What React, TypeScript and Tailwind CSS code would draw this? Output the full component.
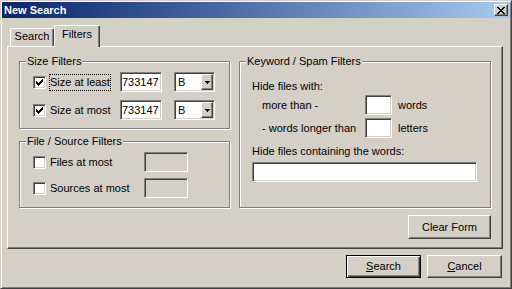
import React from "react";

const sunken =
  "border border-t-[#808080] border-l-[#808080] border-b-white border-r-white shadow-[inset_1px_1px_0_#404040,inset_-1px_-1px_0_#d4d0c8]";
const raised =
  "border border-t-white border-l-white border-b-[#404040] border-r-[#404040] shadow-[inset_-1px_-1px_0_#808080]";

function CheckMark() {
  return (
    <svg width="7" height="7" viewBox="0 0 7 7" shapeRendering="crispEdges">
      <path
        fill="#000"
        d="M6 0h1v1h-1z M5 1h2v1h-2z M0 2h1v1h-1z M4 2h3v1h-3z M0 3h2v1h-2z M3 3h3v1h-3z M0 4h5v1h-5z M1 5h3v1h-3z M2 6h1v1h-1z"
      />
    </svg>
  );
}

function Check({ checked }: { checked?: boolean }) {
  return (
    <div className={`w-[13px] h-[13px] shrink-0 bg-white flex items-center justify-center ${sunken}`}>
      {checked && <CheckMark />}
    </div>
  );
}

function Group({
  label,
  className,
  children,
}: {
  label: string;
  className?: string;
  children?: React.ReactNode;
}) {
  return (
    <div className={`relative border border-[#808080] shadow-[1px_1px_0_white,inset_1px_1px_0_white] ${className ?? ""}`}>
      <span className="absolute left-[6px] top-[-7px] bg-[#d4d0c8] px-[1px] leading-[13px] whitespace-nowrap">
        {label}
      </span>
      {children}
    </div>
  );
}

function Arrow() {
  return (
    <svg width="5" height="3" viewBox="0 0 5 3" shapeRendering="crispEdges">
      <path fill="#000" d="M0 0h5v1H0z M1 1h3v1H1z M2 2h1v1H2z" />
    </svg>
  );
}

function SizeRow({ label, focused }: { label: string; focused?: boolean }) {
  return (
    <div className="flex items-center h-[20px]">
      <div className="w-[87px] flex items-center">
        <Check checked />
        <span
          className={`ml-[3px] py-[1px] border leading-[13px] whitespace-nowrap ${
            focused ? "border-dotted border-black" : "border-transparent"
          }`}
        >
          {label}
        </span>
      </div>
      <div className={`w-[42px] h-[20px] bg-white pl-[1px] overflow-hidden flex items-center whitespace-nowrap ${sunken}`}>
        733147
      </div>
      <div className={`ml-[12px] w-[41px] h-[20px] bg-white p-[1px] flex items-stretch justify-between ${sunken}`}>
        <span className="pl-[2px] flex items-center">B</span>
        <div className={`w-[12px] bg-[#d4d0c8] flex items-center justify-center ${raised}`}>
          <Arrow />
        </div>
      </div>
    </div>
  );
}

function FileRow({ label }: { label: string }) {
  return (
    <div className="flex items-center h-[20px]">
      <div className="w-[111px] flex items-center">
        <Check />
        <span className="ml-[4px] leading-[13px] whitespace-nowrap">{label}</span>
      </div>
      <div className={`w-[44px] h-[20px] bg-[#d4d0c8] ${sunken}`} />
    </div>
  );
}

function KwRow({ label, unit, className }: { label: string; unit: string; className?: string }) {
  return (
    <div className={`flex items-center h-[20px] pl-[10px] ${className ?? ""}`}>
      <span className="w-[103px] leading-[13px] whitespace-nowrap">{label}</span>
      <div className={`w-[27px] h-[20px] bg-white ${sunken}`} />
      <span className="ml-[6px] leading-[13px]">{unit}</span>
    </div>
  );
}

export default function App() {
  return (
    <div
      className="w-[512px] h-[289px] bg-[#d4d0c8] border border-t-[#d4d0c8] border-l-[#d4d0c8] border-b-[#404040] border-r-[#404040] shadow-[inset_1px_1px_0_white,inset_-1px_-1px_0_#808080] p-[1px] flex flex-col text-[11px] leading-[13px] text-black"
      style={{ fontFamily: '"Liberation Sans", Arial, sans-serif' }}
    >
      {/* Title bar */}
      <div className="h-[16px] shrink-0 flex items-center justify-between pl-[2px] pr-[2px] bg-linear-to-r from-[#0a246a] to-[#a6caf0]">
        <span className="text-white font-bold text-[11px] leading-[13px]">New Search</span>
        <div className={`w-[14px] h-[12px] bg-[#d4d0c8] flex items-center justify-center ${raised}`}>
          <svg width="8" height="7" viewBox="0 0 8 7" shapeRendering="crispEdges">
            <path
              fill="#000"
              d="M0 0h2v1H0z M6 0h2v1H6z M1 1h2v1H1z M5 1h2v1H5z M2 2h4v1H2z M3 3h2v1H3z M2 4h4v1H2z M1 5h2v1H1z M5 5h2v1H5z M0 6h2v1H0z M6 6h2v1H6z"
            />
          </svg>
        </div>
      </div>

      {/* Tabs */}
      <div className="h-[28px] shrink-0 flex items-end pl-[8px]">
        <div className="w-[44px] h-[18px] pt-[1px] text-center border-t border-l border-r border-t-white border-l-white border-r-[#404040] shadow-[inset_-1px_0_0_#808080] rounded-tl-[2px] rounded-tr-[2px]">
          Search
        </div>
        <div className="relative z-10 w-[46px] h-[22px] mb-[-1px] pt-[2px] text-center bg-[#d4d0c8] border-t border-l border-r border-t-white border-l-white border-r-[#404040] shadow-[inset_-1px_0_0_#808080] rounded-tl-[2px] rounded-tr-[2px]">
          Filters
        </div>
      </div>

      {/* Panel */}
      <div className="ml-[5px] w-[496px] h-[203px] shrink-0 border border-t-white border-l-white border-b-[#404040] border-r-[#404040] shadow-[inset_-1px_-1px_0_#808080] pt-[14px] pl-[11px]">
        <div className="flex gap-[9px]">
          <div className="w-[211px] flex flex-col">
            <Group label="Size Filters" className="h-[68px] pt-[10px] pl-[13px] flex flex-col gap-[8px]">
              <SizeRow label="Size at least" focused />
              <SizeRow label="Size at most" />
            </Group>
            <Group label="File / Source Filters" className="mt-[12px] h-[67px] pt-[10px] pl-[13px] flex flex-col gap-[6px]">
              <FileRow label="Files at most" />
              <FileRow label="Sources at most" />
            </Group>
          </div>
          <div className="w-[252px] flex flex-col">
            <Group label="Keyword / Spam Filters" className="h-[147px] pt-[18px] pl-[12px] flex flex-col">
              <span className="leading-[13px]">Hide files with:</span>
              <KwRow label="more than -" unit="words" className="mt-[2px]" />
              <KwRow label="- words longer than" unit="letters" className="mt-[3px]" />
              <span className="mt-[7px] leading-[13px]">Hide files containing the words:</span>
              <div className={`mt-[4px] w-[225px] h-[20px] bg-white ${sunken}`} />
            </Group>
            <div className="flex justify-end mt-[7px]">
              <button className={`w-[83px] h-[24px] bg-[#d4d0c8] flex items-center justify-center ${raised}`}>
                Clear Form
              </button>
            </div>
          </div>
        </div>
      </div>

      {/* Bottom buttons */}
      <div className="ml-[5px] w-[496px] mt-[6px] flex justify-end gap-[6px] pr-[1px]">
        <button className="w-[75px] h-[23px] bg-[#d4d0c8] border border-black shadow-[inset_1px_1px_0_white,inset_-1px_-1px_0_#404040,inset_-2px_-2px_0_#808080] flex items-center justify-center">
          <span>
            <span className="underline">S</span>earch
          </span>
        </button>
        <button className={`w-[75px] h-[23px] bg-[#d4d0c8] flex items-center justify-center ${raised}`}>
          <span>
            <span className="underline">C</span>ancel
          </span>
        </button>
      </div>
    </div>
  );
}
